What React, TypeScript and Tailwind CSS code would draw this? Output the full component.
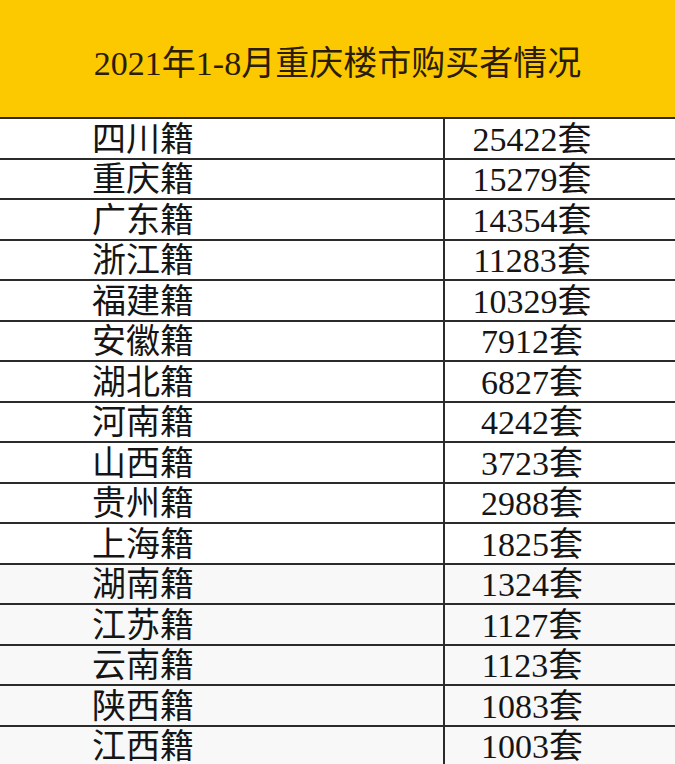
const rows: [string, string][] = [
  ['四川籍', '25422'],
  ['重庆籍', '15279'],
  ['广东籍', '14354'],
  ['浙江籍', '11283'],
  ['福建籍', '10329'],
  ['安徽籍', '7912'],
  ['湖北籍', '6827'],
  ['河南籍', '4242'],
  ['山西籍', '3723'],
  ['贵州籍', '2988'],
  ['上海籍', '1825'],
  ['湖南籍', '1324'],
  ['江苏籍', '1127'],
  ['云南籍', '1123'],
  ['陕西籍', '1083'],
  ['江西籍', '1003'],
];

const font = { fontFamily: '"Liberation Serif", "Noto Sans CJK SC", serif' };

export default function App() {
  return (
    <div className="w-[675px] h-[764px] overflow-hidden bg-white" style={font}>
      {/* Title bar */}
      <div className="h-[117px] bg-[#fcc800] flex items-center justify-center">
        <h1 className="text-[34px] leading-none text-[#2a1c05] pt-[10px]">
          2021年1-8月重庆楼市购买者情况
        </h1>
      </div>

      {/* Table */}
      <div className="border-t-2 border-[#2b2b2b]">
        {rows.map(([name, count], i) => (
          <div
            key={name}
            className={`h-[40.5px] flex border-b-2 border-[#2b2b2b] ${i > 10 ? 'bg-[#f8f8f8]' : 'bg-white'}`}
          >
            <div className="w-[443px] flex items-center pl-[92px] pt-[3px] text-[34px] leading-none text-[#151515]">
              {name}
            </div>
            <div className="flex-1 border-l-2 border-[#2b2b2b] flex items-center justify-center pr-[56px] pt-[3px] text-[34px] leading-none text-[#151515]">
              {count}套
            </div>
          </div>
        ))}
      </div>
    </div>
  );
}
